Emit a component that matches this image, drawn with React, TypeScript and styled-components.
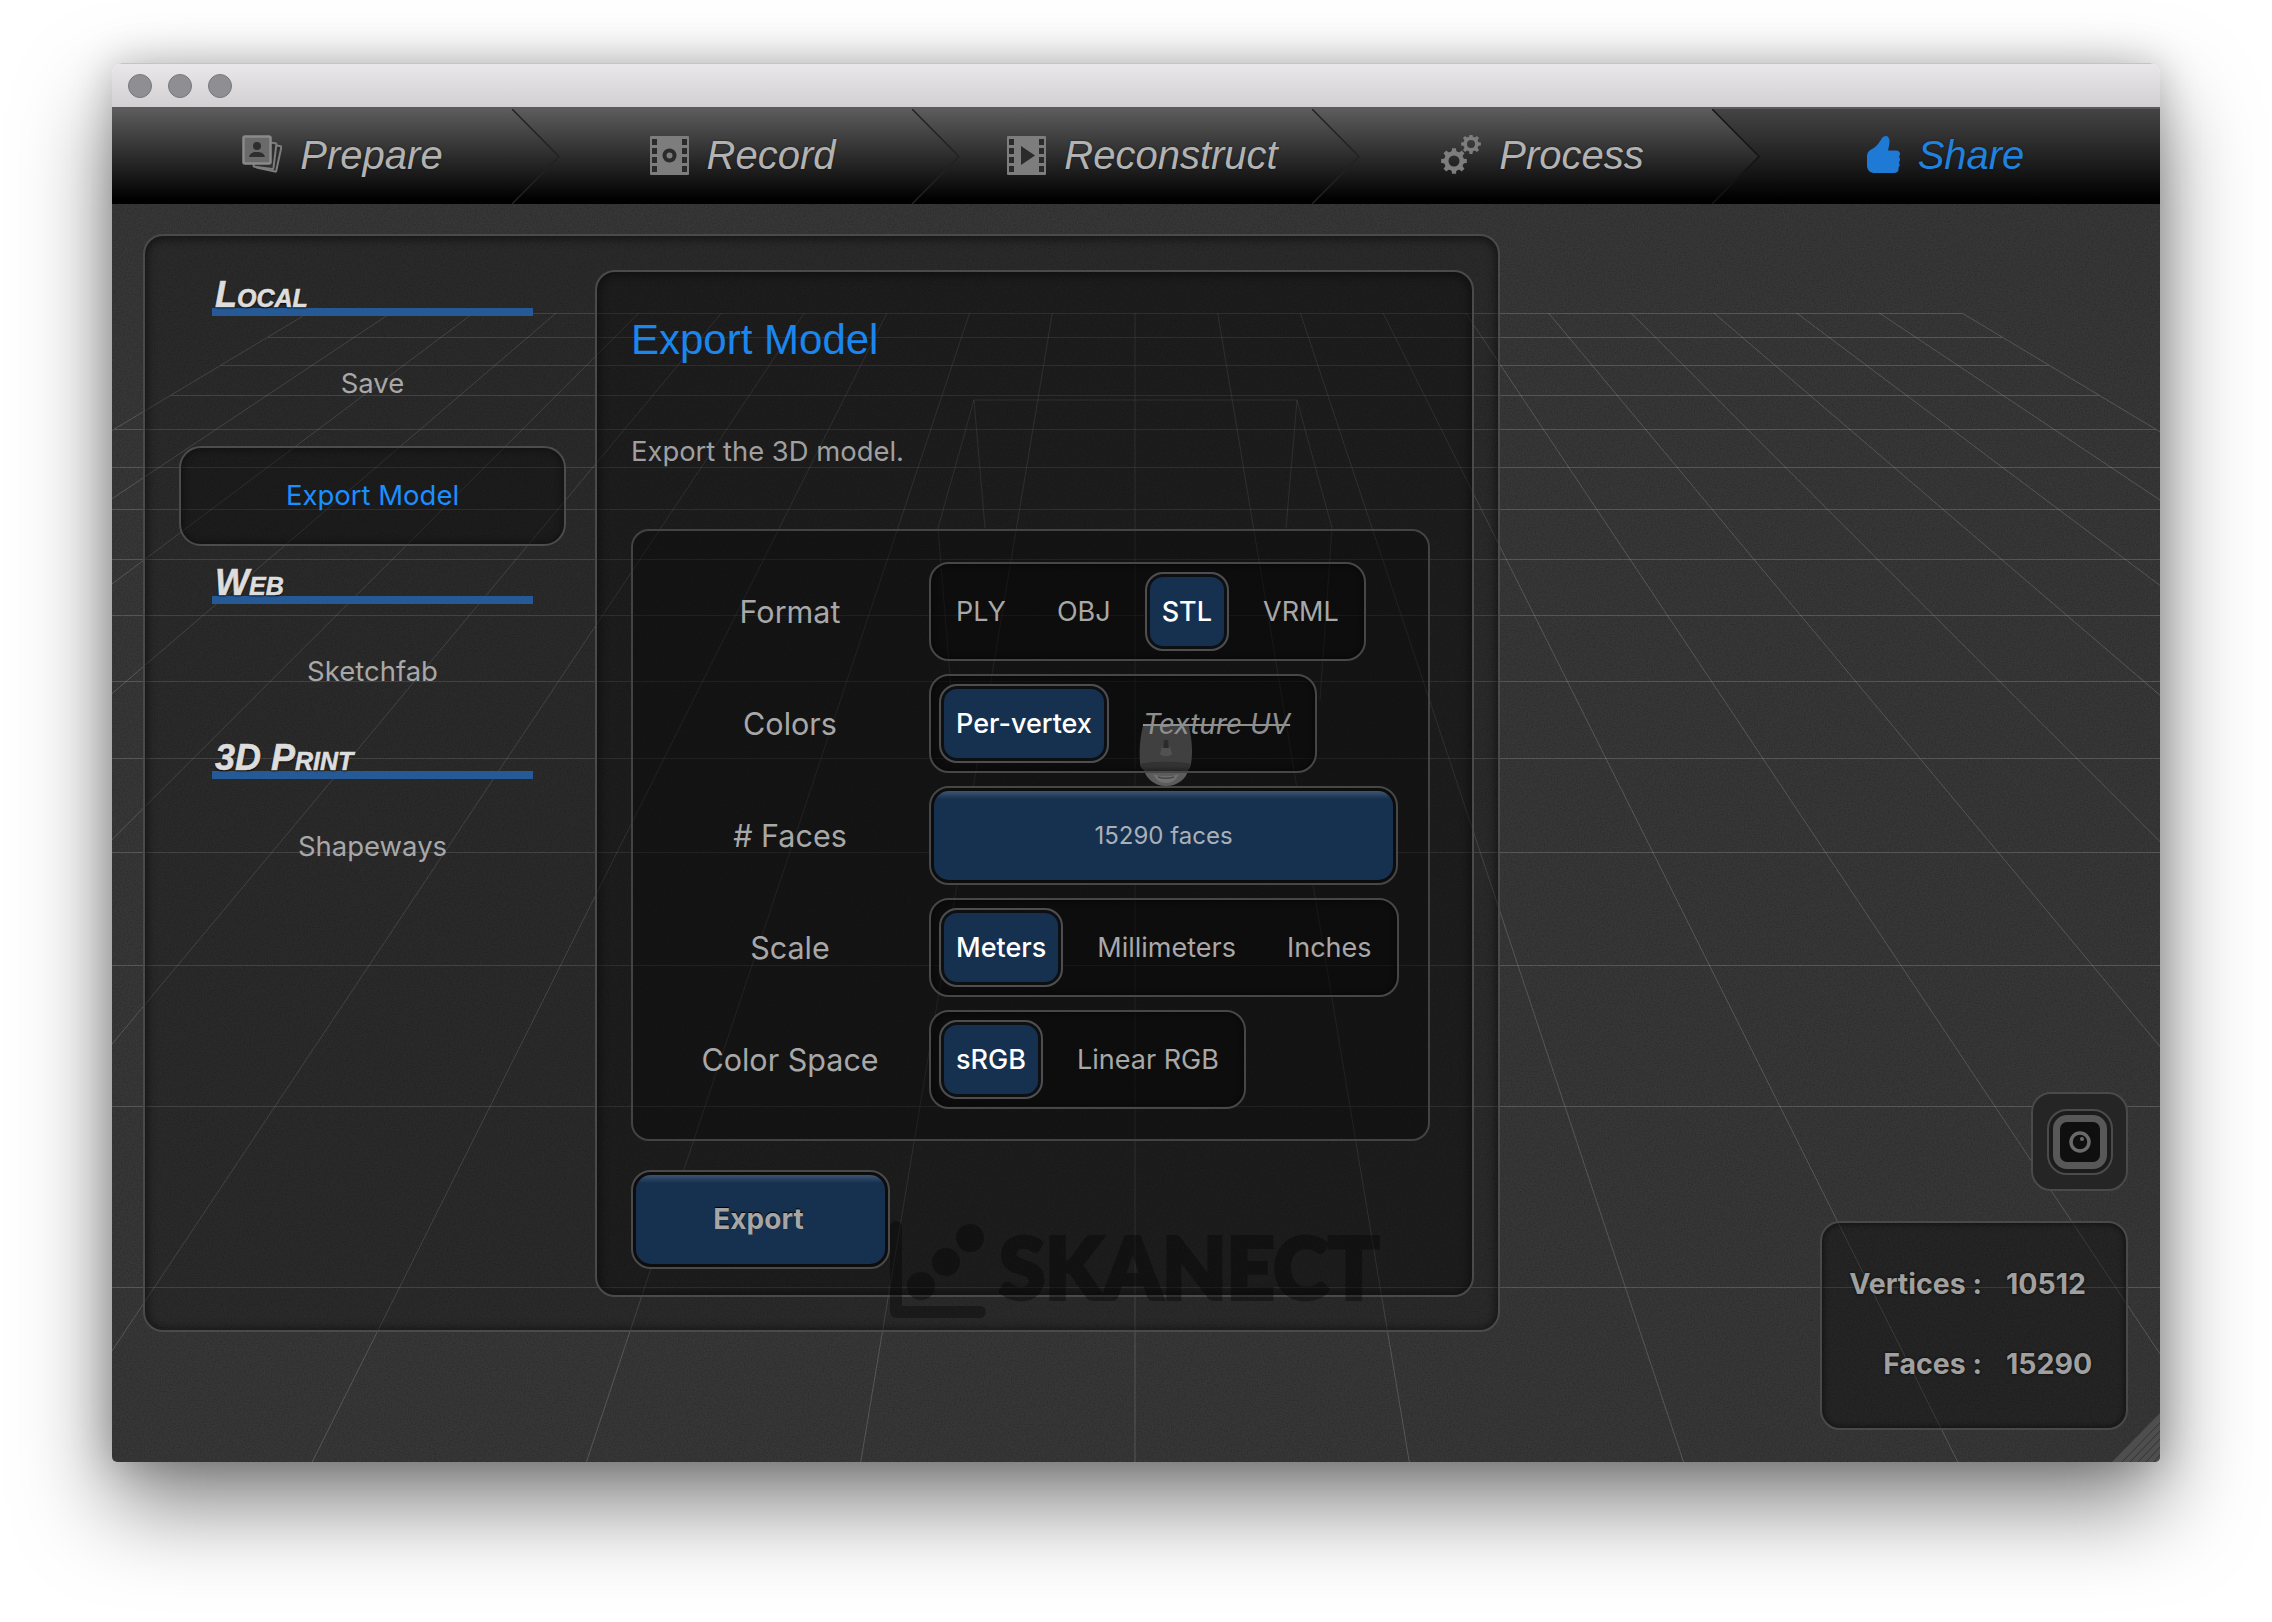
import React from 'react';
import styled, { createGlobalStyle } from 'styled-components';

const UI_FONT = `Inter, "Liberation Sans", sans-serif`;
const HEAD_FONT = `"Liberation Sans", Arial, sans-serif`;

const GlobalStyle = createGlobalStyle`
  html, body {
    margin: 0;
    background: #ffffff;
  }
  * {
    box-sizing: border-box;
  }
`;

const Page = styled.div`
  width: 2272px;
  height: 1622px;
  padding: 63px 112px 160px;
  background: #ffffff;
  overflow: hidden;
`;

const Window = styled.div`
  width: 2048px;
  height: 1399px;
  display: flex;
  flex-direction: column;
  border-radius: 10px 10px 5px 5px;
  overflow: hidden;
  box-shadow: 0 42px 90px rgba(0, 0, 0, 0.5), 0 0 40px rgba(0, 0, 0, 0.22);
`;

const TitleBar = styled.div`
  height: 46px;
  flex: none;
  display: flex;
  align-items: center;
  gap: 16px;
  padding: 0 0 0 16px;
  background: linear-gradient(#e9e7e9, #d2d0d3);
  border-top: 1px solid #c4c4c4;
  border-bottom: 2px solid #5a5a5a;
`;

const Light = styled.span`
  width: 24px;
  height: 24px;
  border-radius: 50%;
  background: #8f8e93;
  border: 1px solid #78777c;
`;

const TabBar = styled.div`
  height: 95px;
  flex: none;
  display: flex;
  background: linear-gradient(#444444, #222222 50%, #000000 96%);
`;

const Tab = styled.div<{ $active?: boolean }>`
  position: relative;
  flex: 0 0 400px;
  height: 95px;
  padding: 0 0 3px ${(p) => (p.$active ? '67px' : '61px')};
  display: flex;
  align-items: center;
  justify-content: center;
  gap: 18px;
  background: ${(p) => (p.$active ? 'none' : 'linear-gradient(#5c5c5c, #2c2c2c 50%, #000000 96%)')};
  color: ${(p) => (p.$active ? '#2182de' : '#b2b2b2')};
  font: italic 400 40px ${HEAD_FONT};
  text-shadow: 0 0 2px rgba(0, 0, 0, 0.6);
  svg {
    flex: none;
  }
`;

const Chevron = styled.svg`
  position: absolute;
  top: 0;
  left: 100%;
  z-index: 1;
`;

const Viewport = styled.div`
  position: relative;
  flex: 1;
  display: flex;
  justify-content: space-between;
  padding: 30px 32px 32px 31px;
  background: #373737;
`;

const Scene = styled.svg`
  position: absolute;
  inset: 0;
`;

const Panel = styled.div`
  position: relative;
  width: 1357px;
  height: 1098px;
  display: flex;
  gap: 29px;
  padding: 22px 24px 33px 34px;
  border: 2px solid #4a4a4a;
  border-radius: 20px;
  background: rgba(0, 0, 0, 0.22);
  box-shadow: inset 0 1px 8px 3px rgba(0, 0, 0, 0.45);
`;

const Sidebar = styled.div`
  width: 387px;
  flex: none;
  display: flex;
  flex-direction: column;
`;

const SectionHeading = styled.div`
  height: 58px;
  margin: 0 33px;
  padding: 0 0 0 3px;
  display: flex;
  align-items: flex-end;
  border-bottom: 8px solid transparent;
  border-image: linear-gradient(rgba(38, 90, 150, 0) 15%, #265a96 85%) 8;
  color: #dddddd;
  font: italic 700 36px/36px ${HEAD_FONT};
  font-variant: small-caps;
  -webkit-text-stroke: 0.6px #dddddd;
  span {
    margin-bottom: -5px;
    text-shadow: 0 1px 2px #000000;
  }
`;

const SideItems = styled.div`
  display: flex;
  flex-direction: column;
  gap: 13px;
  margin-top: 17px;
`;

const SideItem = styled.div<{ $active?: boolean }>`
  height: 100px;
  padding-bottom: ${(p) => (p.$active ? '2px' : '0')};
  display: flex;
  align-items: center;
  justify-content: center;
  border: 2px solid ${(p) => (p.$active ? '#4c4c4c' : 'transparent')};
  border-radius: 22px;
  background: ${(p) => (p.$active ? 'rgba(0, 0, 0, 0.32)' : 'none')};
  box-shadow: ${(p) => (p.$active ? 'inset 0 0 6px 2px rgba(0, 0, 0, 0.35)' : 'none')};
  color: ${(p) => (p.$active ? '#1a8fff' : '#a8a8a8')};
  font: 400 27.5px ${UI_FONT};
`;

const Content = styled.div`
  flex: 1;
  margin-top: 12px;
  padding: 41px 0 0 34px;
  display: flex;
  flex-direction: column;
  align-items: flex-start;
  border: 2px solid #4a4a4a;
  border-radius: 20px;
  background: rgba(0, 0, 0, 0.3);
  box-shadow: inset 0 1px 8px 3px rgba(0, 0, 0, 0.4);
`;

const Title = styled.div`
  height: 54px;
  color: #1a86ee;
  font: 400 42px/54px ${HEAD_FONT};
`;

const Description = styled.div`
  margin-top: 66px;
  height: 36px;
  color: #a0a0a0;
  font: 400 27.4px/36px ${UI_FONT};
`;

const Form = styled.div`
  position: relative;
  width: 799px;
  height: 612px;
  margin-top: 60px;
  padding: 31px 0 0 18px;
  display: flex;
  flex-direction: column;
  gap: 13px;
  border: 2px solid #434343;
  border-radius: 18px;
  background: rgba(0, 0, 0, 0.28);
`;

const Head = styled.svg`
  position: absolute;
  left: 505px;
  top: 195px;
`;

const Row = styled.div`
  position: relative;
  height: 99px;
  display: flex;
  align-items: center;
`;

const RowLabel = styled.div`
  width: 278px;
  flex: none;
  text-align: center;
  color: #a8a8a8;
  font: 400 30.5px ${UI_FONT};
`;

const Group = styled.div`
  height: 99px;
  padding: 8px;
  display: flex;
  gap: 17px;
  border: 2px solid #474747;
  border-radius: 20px;
  background: rgba(0, 0, 0, 0.3);
  box-shadow: inset 0 0 5px 1px rgba(0, 0, 0, 0.5);
`;

const Segment = styled.div<{ $active?: boolean; $off?: boolean }>`
  height: 79px;
  padding: 0 15px;
  display: flex;
  align-items: center;
  border: 2px solid ${(p) => (p.$active ? '#4e4e4e' : 'transparent')};
  border-radius: 18px;
  background: ${(p) => (p.$active ? '#16304f' : 'none')};
  box-shadow: ${(p) => (p.$active ? 'inset 0 0 0 3px #0d0f12' : 'none')};
  color: ${(p) => (p.$active ? '#ffffff' : p.$off ? '#8f8f8f' : '#a8a8a8')};
  font: ${(p) => (p.$off ? 'italic 400 28px' : p.$active ? '500 27px' : '400 27px')} ${UI_FONT};
  text-decoration: ${(p) => (p.$off ? 'line-through' : 'none')};
`;

const SliderTrack = styled.div`
  width: 469px;
  height: 99px;
  padding: 3px;
  border: 2px solid #474747;
  border-radius: 20px;
  background: #0c0c0c;
`;

const SliderFill = styled.div`
  height: 89px;
  display: flex;
  align-items: center;
  justify-content: center;
  border-radius: 15px;
  background: linear-gradient(#3d5672, #16304f 8px);
  color: #a9b0b8;
  font: 400 24px ${UI_FONT};
`;

const ExportButton = styled.div`
  width: 259px;
  height: 99px;
  margin-top: 29px;
  padding: 3px;
  border: 2px solid #4a4a4a;
  border-radius: 20px;
  background: #0d0d0d;
  div {
    height: 89px;
    padding: 0 4px 2px 0;
    display: flex;
    align-items: center;
    justify-content: center;
    border-radius: 15px;
    background: linear-gradient(#3a5471, #16304f 8px);
    color: #a6a6a6;
    font: 700 28px ${UI_FONT};
    text-shadow: 0 -1px 1px #000000;
  }
`;

const Watermark = styled.svg`
  position: absolute;
  left: 773px;
  top: 1011px;
  pointer-events: none;
`;

const SideTools = styled.div`
  position: relative;
  display: flex;
  flex-direction: column;
  align-items: flex-end;
  justify-content: flex-end;
  gap: 30px;
`;

const CameraButton = styled.div`
  width: 97px;
  height: 99px;
  display: flex;
  align-items: center;
  justify-content: center;
  border: 2px solid #4a4a4a;
  border-radius: 20px;
  background: #252525;
`;

const CameraRing = styled.div`
  width: 66px;
  height: 66px;
  padding: 4px;
  border: 2px solid #4b4b4b;
  border-radius: 20px;
  background: #1c1c1c;
`;

const CameraFace = styled.div`
  width: 100%;
  height: 100%;
  display: flex;
  align-items: center;
  justify-content: center;
  border: 7px solid #585858;
  border-radius: 14px;
  background: #0f0f0f;
`;

const Stats = styled.div`
  width: 308px;
  height: 209px;
  padding: 20px 0 0 26px;
  display: grid;
  grid-template-columns: 134px auto;
  grid-auto-rows: 80px;
  column-gap: 24px;
  align-items: center;
  align-content: start;
  border: 2px solid #494949;
  border-radius: 20px;
  background: rgba(0, 0, 0, 0.32);
  box-shadow: inset 0 0 5px 2px rgba(0, 0, 0, 0.4);
  color: #a0a0a0;
  font: 700 28.5px ${UI_FONT};
  text-shadow: 0 0 3px rgba(0, 0, 0, 0.9);
`;

const StatLabel = styled.div`
  text-align: right;
  white-space: nowrap;
`;

const Grip = styled.svg`
  position: absolute;
  right: 0;
  bottom: 0;
`;

const ICON = '#7d7d7d';

const PrepareIcon = () => (
  <svg width="40" height="40" viewBox="0 0 40 40">
    <g fill="none" stroke={ICON} strokeWidth="2">
      <rect x="17" y="9" width="20" height="26" rx="1" transform="rotate(12 27 22)" fill="#2b2b2b" />
      <rect x="13" y="7" width="20" height="26" rx="1" transform="rotate(7 23 20)" fill="#303030" />
    </g>
    <rect x="1.5" y="1.5" width="27" height="27" rx="1.5" fill="#6a6a6a" stroke="#8a8a8a" strokeWidth="2.5" />
    <circle cx="15" cy="11" r="4" fill="#2e2e2e" />
    <path d="M7 22c1-4 4-5 8-5s7 1 8 5z" fill="#2e2e2e" />
  </svg>
);

const FilmIcon = ({ play }: { play?: boolean }) => (
  <svg width="39" height="39" viewBox="0 0 39 39">
    <rect x="0" y="0" width="39" height="39" rx="1" fill={ICON} />
    {[3, 12, 21, 30].map((y) => (
      <React.Fragment key={y}>
        <rect x="2" y={y} width="5" height="6" fill="#2a2a2a" />
        <rect x="32" y={y} width="5" height="6" fill="#2a2a2a" />
      </React.Fragment>
    ))}
    {play ? <path d="M14 10l14 9.5L14 29z" fill="#2b2b2b" /> : <circle cx="19.5" cy="19.5" r="7" fill="#2b2b2b" />}
    {!play && <circle cx="19.5" cy="19.5" r="3" fill={ICON} />}
  </svg>
);

const gearPath = (cx: number, cy: number, r: number, hole: number, teeth = 8) => {
  const pts: string[] = [];
  for (let i = 0; i < teeth; i++) {
    const a = (i / teeth) * Math.PI * 2;
    const w = Math.PI / teeth;
    const at = (rad: number, ang: number) => `${(cx + rad * Math.cos(ang)).toFixed(2)} ${(cy + rad * Math.sin(ang)).toFixed(2)}`;
    pts.push(at(r * 0.74, a - w), at(r * 0.8, a - w * 0.55), at(r, a - w * 0.4), at(r, a + w * 0.4), at(r * 0.8, a + w * 0.55));
  }
  const circle = `M${cx + hole} ${cy}a${hole} ${hole} 0 1 0 ${-hole * 2} 0a${hole} ${hole} 0 1 0 ${hole * 2} 0z`;
  return `M${pts.join('L')}z${circle}`;
};

const GearsIcon = () => (
  <svg width="40" height="40" viewBox="0 0 40 40">
    <path d={gearPath(13, 26, 13, 5.5)} fill={ICON} fillRule="evenodd" />
    <path d={gearPath(30, 9, 10, 4)} fill={ICON} fillRule="evenodd" />
  </svg>
);

const ThumbIcon = () => (
  <svg width="33" height="38" viewBox="0 0 33 38">
    <path
      d="M19 0c2 0 3.500 2 3.500 5 0 3.500-1 7-1.500 9.500h8c2.500 0 4 1.500 4 3.500 0 1-.4 2-1 2.700.6.700 1 1.700 1 2.800 0 1.200-.5 2.200-1.200 2.900.5.600.8 1.500.8 2.400 0 1.200-.5 2.200-1.300 2.900.2.500.3 1 .3 1.400 0 2.500-2 3.900-4.500 3.900H8c-4.500 0-8-2.500-8-7.500v-9.500c0-3.500 2-5.500 5-7 5-2.500 8-7.500 10-11C15.800 1 17 0 19 0z"
      fill="#1f7ad6"
    />
  </svg>
);

const tabs = [
  { label: 'Prepare', icon: <PrepareIcon /> },
  { label: 'Record', icon: <FilmIcon /> },
  { label: 'Reconstruct', icon: <FilmIcon play /> },
  { label: 'Process', icon: <GearsIcon /> },
  { label: 'Share', icon: <ThumbIcon />, active: true },
];

const sections = [
  { title: 'Local', items: [{ label: 'Save' }, { label: 'Export Model', active: true }] },
  { title: 'Web', items: [{ label: 'Sketchfab' }] },
  { title: '3D Print', items: [{ label: 'Shapeways' }] },
];

const rows = [
  { label: 'Format', options: ['PLY', 'OBJ', 'STL', 'VRML'], selected: 'STL' },
  { label: 'Colors', options: ['Per-vertex', 'Texture UV'], selected: 'Per-vertex', off: 'Texture UV' },
  { label: '# Faces', slider: '15290 faces' },
  { label: 'Scale', options: ['Meters', 'Millimeters', 'Inches'], selected: 'Meters' },
  { label: 'Color Space', options: ['sRGB', 'Linear RGB'], selected: 'sRGB' },
];

// grid floor, in page coordinates: everything runs to one vanishing point
const GRID_Y = [313, 337, 365, 395, 429, 467, 509, 559, 615, 681, 758, 852, 965, 1106, 1287];
const CENTER_X = 1135;
const VANISH_Y = -183;
const gridX = (n: number, y: number) => CENTER_X + (82.7 * n * (y - VANISH_Y)) / 496;
const LINE = 'rgba(255,255,255,0.17)';

const GridScene = () => {
  const columns = Array.from({ length: 21 }, (_, i) => i - 10);
  return (
    <Scene width="2048" height="1258" viewBox="112 204 2048 1258">
      <defs>
        <filter id="grain" x="0" y="0" width="100%" height="100%">
          <feTurbulence type="fractalNoise" baseFrequency="0.7" numOctaves="2" seed="4" />
          <feColorMatrix values="0 0 0 0 0  0 0 0 0 0  0 0 0 0 0  0 0 0 1.1 -0.42" />
        </filter>
      </defs>
      <rect x="112" y="204" width="2048" height="1258" filter="url(#grain)" opacity="0.35" />
      {GRID_Y.map((y) => (
        <line key={y} x1={gridX(-10, y)} x2={gridX(10, y)} y1={y + 0.5} y2={y + 0.5} stroke={LINE} strokeWidth="1" />
      ))}
      {columns.map((n) => (
        <line key={n} x1={gridX(n, 313)} y1="313" x2={gridX(n, 1462)} y2="1462" stroke={LINE} strokeWidth="1" />
      ))}
      <g stroke={LINE} strokeWidth="1" fill="none">
        <path d="M938 528L974 400H1297L1332 528" />
        <path d="M985 528L974 400M1286 528L1297 400" />
        <path d="M938 528L952 700M1332 528L1320 700" />
      </g>
    </Scene>
  );
};

const App: React.FC = () => (
  <Page>
    <GlobalStyle />
    <Window>
      <TitleBar>
        <Light />
        <Light />
        <Light />
      </TitleBar>
      <TabBar>
        {tabs.map((tab, i) => (
          <Tab key={tab.label} $active={tab.active}>
            {tab.icon}
            {tab.label}
            {i < 4 && (
              <Chevron width="48" height="95" viewBox="0 0 48 95">
                <defs>
                  <linearGradient id={`tab${i}`} x1="0" y1="0" x2="0" y2="1">
                    <stop offset="0" stopColor="#5c5c5c" />
                    <stop offset="0.5" stopColor="#2c2c2c" />
                    <stop offset="0.96" stopColor="#000000" />
                  </linearGradient>
                </defs>
                <path d="M0 0L47 47.500L0 95z" fill={`url(#tab${i})`} />
                <path d="M0 0L47 47.500L0 95" fill="none" stroke={i === 3 ? '#141414' : '#222222'} strokeWidth="1.5" />
              </Chevron>
            )}
          </Tab>
        ))}
      </TabBar>
      <Viewport>
        <GridScene />
        <Panel>
          <Sidebar>
            {sections.map((section) => (
              <React.Fragment key={section.title}>
                <SectionHeading>
                  <span>{section.title}</span>
                </SectionHeading>
                <SideItems>
                  {section.items.map((item) => (
                    <SideItem key={item.label} $active={item.active}>
                      {item.label}
                    </SideItem>
                  ))}
                </SideItems>
              </React.Fragment>
            ))}
          </Sidebar>
          <Content>
            <Title>Export Model</Title>
            <Description>Export the 3D model.</Description>
            <Form>
              <Head width="56" height="60" viewBox="0 0 56 60">
                <path d="M5 0h46c3 14 4 26 2 38-1 4-2 5-3 6-1 8-10 16-22 16S8 52 6 44C3 42 2 40 2 36 1 24 2 12 5 0z" fill="#5c5c5c" />
                <path d="M2 38c8-3 44-3 51 0-1 3-2 5-3 6-8 2-36 2-44 0-2-2-3-4-4-6z" fill="#4a4a4a" />
                <path d="M22 28c2-8 4-12 6-12s4 4 6 12c-3 3-9 3-12 0z" fill="#757575" />
                <path d="M26 14h4l1 8h-6z" fill="#3e3e3e" />
                <path d="M15 48c8 3 18 3 26 0-3 6-7 9-13 9s-10-3-13-9z" fill="#707070" />
                <path d="M20 51c5 1.500 11 1.500 16 0" fill="none" stroke="#484848" strokeWidth="1.5" />
              </Head>
              {rows.map((row) => (
                <Row key={row.label}>
                  <RowLabel>{row.label}</RowLabel>
                  {row.slider ? (
                    <SliderTrack>
                      <SliderFill>{row.slider}</SliderFill>
                    </SliderTrack>
                  ) : (
                    <Group>
                      {row.options?.map((option) => (
                        <Segment key={option} $active={option === row.selected} $off={option === row.off}>
                          {option}
                        </Segment>
                      ))}
                    </Group>
                  )}
                </Row>
              ))}
            </Form>
            <ExportButton>
              <div>Export</div>
            </ExportButton>
          </Content>
        </Panel>
        <SideTools>
          <CameraButton>
            <CameraRing>
              <CameraFace>
                <svg width="24" height="24" viewBox="0 0 24 24">
                  <circle cx="12" cy="12" r="9" fill="none" stroke="#6a6a6a" strokeWidth="3.5" />
                  <circle cx="14" cy="9" r="2" fill="#6a6a6a" />
                </svg>
              </CameraFace>
            </CameraRing>
          </CameraButton>
          <Stats>
            <StatLabel>Vertices :</StatLabel>
            <div>10512</div>
            <StatLabel>Faces :</StatLabel>
            <div>15290</div>
          </Stats>
        </SideTools>
        <Watermark width="510" height="110" viewBox="885 1215 510 110">
          <g opacity="0.34" fill="#000000">
            <path d="M890 1227a6 6 0 0 1 12 0v79h78a6 6 0 0 1 0 12h-84a6 6 0 0 1-6-6z" />
            <circle cx="970" cy="1238" r="14" />
            <circle cx="946" cy="1262" r="14" />
            <circle cx="921" cy="1286" r="14" />
            <text x="999" y="1299" fontFamily="Lato, sans-serif" fontWeight="900" fontSize="85" stroke="#000000" strokeWidth="4" textLength="380" lengthAdjust="spacingAndGlyphs">
              SKANECT
            </text>
          </g>
        </Watermark>
        <Grip width="48" height="49" viewBox="0 0 48 49">
          <path d="M48 0V49H0z" fill="#4e4e4e" />
          <g stroke="#343434" strokeWidth="1">
            {[8, 16, 24, 32, 40].map((o) => (
              <line key={o} x1={48} y1={o + 2} x2={o + 2} y2={49} />
            ))}
          </g>
        </Grip>
      </Viewport>
    </Window>
  </Page>
);

export default App;
